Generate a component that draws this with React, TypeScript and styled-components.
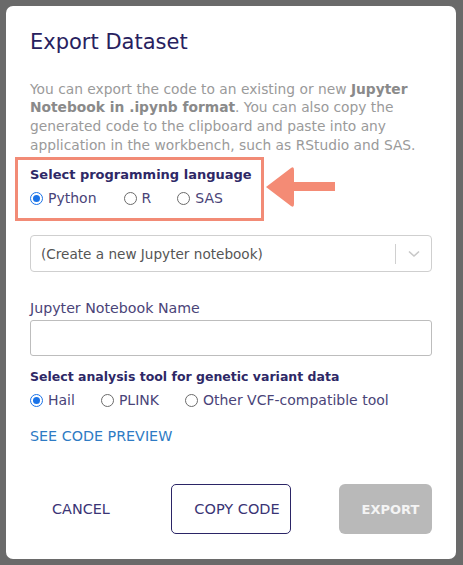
import React from 'react'
import styled, { createGlobalStyle } from 'styled-components'

const GlobalStyle = createGlobalStyle`
  html, body {
    margin: 0;
    padding: 0;
    background: #6a6a6a;
  }
  body {
    font-family: "DejaVu Sans", "Open Sans", sans-serif;
  }
`

const Backdrop = styled.div`
  width: 463px;
  height: 565px;
  background: #6a6a6a;
  padding: 6px 7px 6px 6px;
  box-sizing: border-box;
`

const Modal = styled.div`
  background: #fff;
  border-radius: 7px;
  height: 553px;
  box-sizing: border-box;
  padding: 24px 24px 0 24px;
  display: flex;
  flex-direction: column;
`

const Title = styled.h2`
  margin: 0;
  font-size: 21px;
  font-weight: 500;
  color: #27215e;
  line-height: 24px;
`

const Intro = styled.p`
  margin: 25.5px 0 0 0;
  font-size: 13.8px;
  line-height: 18.7px;
  color: #9a9a9a;
  white-space: nowrap;

  b {
    color: #8a8a8a;
    font-weight: 700;
  }
`

const HighlightRow = styled.div`
  display: flex;
  align-items: center;
  margin: 3px 0 0 -15px;
`

const Highlight = styled.div`
  border: 3px solid #f28b76;
  padding: 5px 9px 11px 12px;
  width: 249px;
  box-sizing: border-box;
`

const Arrow = styled.svg`
  display: block;
  margin-left: 1px;
  margin-top: -4px;
`

const GroupLabel = styled.div<{ $size?: number }>`
  font-size: ${p => p.$size ?? 13}px;
  font-weight: 600;
  color: #2e2866;
  line-height: 20px;
  white-space: nowrap;
`

const RadioRow = styled.div`
  display: flex;
  align-items: center;
  margin-top: 4px;
`

const RadioItem = styled.label<{ $gap: number }>`
  display: flex;
  align-items: center;
  font-size: 14px;
  color: #4a4478;
  margin-right: ${p => p.$gap}px;
  line-height: 18px;
  white-space: nowrap;
`

const RadioDot = styled.span<{ $on?: boolean }>`
  width: 13px;
  height: 13px;
  border-radius: 50%;
  box-sizing: border-box;
  border: 1px solid ${p => (p.$on ? '#1a73e8' : '#6b6b6b')};
  margin-right: 5px;
  display: inline-flex;
  align-items: center;
  justify-content: center;
  background: #fff;
  flex-shrink: 0;

  &::after {
    content: '';
    width: 7px;
    height: 7px;
    border-radius: 50%;
    background: ${p => (p.$on ? '#1a73e8' : 'transparent')};
  }
`

const Select = styled.div`
  margin-top: 14px;
  height: 37px;
  border: 1px solid #cfcfcf;
  border-radius: 4px;
  display: flex;
  align-items: center;
  box-sizing: border-box;
`

const SelectText = styled.div`
  flex: 1;
  padding-left: 10px;
  font-size: 13.6px;
  color: #555;
  white-space: nowrap;
`

const Divider = styled.div`
  width: 1px;
  height: 20px;
  background: #d0d0d0;
`

const Chevron = styled.div`
  width: 35px;
  display: flex;
  justify-content: center;
  align-items: center;
`

const FieldLabel = styled.div`
  margin-top: 27px;
  font-size: 14.2px;
  color: #4a4478;
  line-height: 18px;
`

const TextInput = styled.div`
  margin-top: 3px;
  height: 36px;
  border: 1px solid #bdbdbd;
  border-radius: 3px;
  box-sizing: border-box;
`

const Section = styled.div`
  margin-top: 11px;
`

const Link = styled.div`
  margin-top: 19px;
  font-size: 14.3px;
  line-height: 16px;
  color: #2e7bc4;
`

const Footer = styled.div`
  margin-top: auto;
  margin-bottom: 25px;
  display: flex;
  align-items: center;
  height: 50px;
`

const TextButton = styled.button`
  border: none;
  background: none;
  font-family: inherit;
  font-size: 14.4px;
  color: #3a3475;
  padding: 0;
  width: 141px;
  text-align: left;
  padding-left: 22px;
`

const OutlineButton = styled.button`
  width: 120px;
  height: 50px;
  border: 1px solid #2b2566;
  border-radius: 5px;
  background: #fff;
  font-family: inherit;
  font-size: 14.5px;
  color: #3a3475;
  padding: 0 0 0 12px;
  white-space: nowrap;
`

const SolidButton = styled.button`
  margin-left: auto;
  width: 93px;
  height: 50px;
  border: none;
  border-radius: 6px;
  background: #b9b9b9;
  font-family: inherit;
  font-size: 13px;
  font-weight: 700;
  color: #f4f4f4;
  padding: 0 0 0 10px;
`

function Radio({ label, on, gap }: { label: string; on?: boolean; gap: number }) {
  return (
    <RadioItem $gap={gap}>
      <RadioDot $on={on} />
      {label}
    </RadioItem>
  )
}

export default function App() {
  return (
    <Backdrop>
      <GlobalStyle />
      <Modal>
        <Title>Export Dataset</Title>
        <Intro>
          You can export the code to an existing or new <b>Jupyter</b>
          <br />
          <b>Notebook in .ipynb format</b>. You can also copy the
          <br />
          generated code to the clipboard and paste into any
          <br />
          application in the workbench, such as RStudio and SAS.
        </Intro>
        <HighlightRow>
          <Highlight>
            <GroupLabel>Select programming language</GroupLabel>
            <RadioRow>
              <Radio label="Python" on gap={27} />
              <Radio label="R" gap={26} />
              <Radio label="SAS" gap={0} />
            </RadioRow>
          </Highlight>
          <Arrow width="72" height="42" viewBox="0 0 72 42">
            <path d="M1 21 L26 2 Q29 0 29 4 L29 16 L70 16 L70 25 L29 25 L29 38 Q29 42 26 40 Z" fill="#f48b75" />
          </Arrow>
        </HighlightRow>
        <Select>
          <SelectText>(Create a new Jupyter notebook)</SelectText>
          <Divider />
          <Chevron>
            <svg width="12" height="8" viewBox="0 0 12 8">
              <path d="M1 1.5 L6 6 L11 1.5" stroke="#c8c8c8" strokeWidth="1.6" fill="none" />
            </svg>
          </Chevron>
        </Select>
        <FieldLabel>Jupyter Notebook Name</FieldLabel>
        <TextInput />
        <Section>
          <GroupLabel $size={12.5}>Select analysis tool for genetic variant data</GroupLabel>
          <RadioRow>
            <Radio label="Hail" on gap={26} />
            <Radio label="PLINK" gap={26} />
            <Radio label="Other VCF-compatible tool" gap={0} />
          </RadioRow>
        </Section>
        <Link>SEE CODE PREVIEW</Link>
        <Footer>
          <TextButton>CANCEL</TextButton>
          <OutlineButton>COPY CODE</OutlineButton>
          <SolidButton>EXPORT</SolidButton>
        </Footer>
      </Modal>
    </Backdrop>
  )
}
